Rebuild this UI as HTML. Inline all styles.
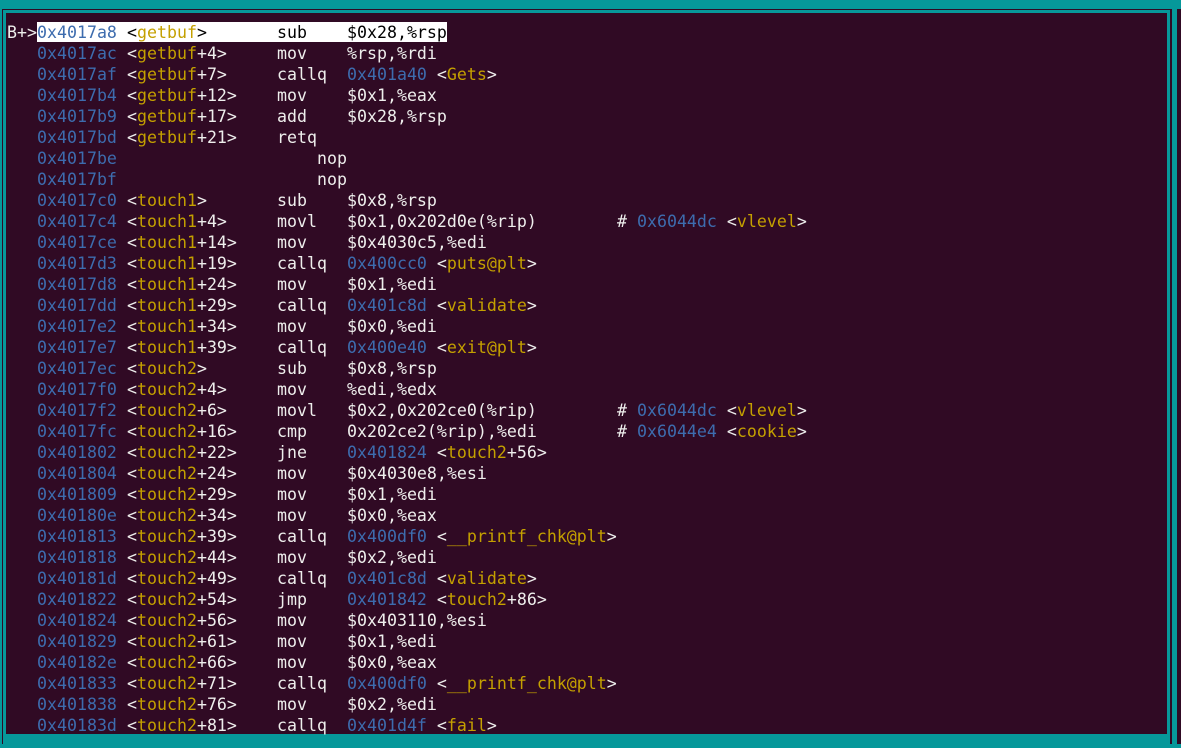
<!DOCTYPE html>
<html><head><style>
html,body{margin:0;padding:0}
body{width:1181px;height:748px;background:#300a24;position:relative;overflow:hidden;font-family:"DejaVu Sans Mono","Liberation Mono",monospace;font-size:16.6px;color:#eeeeec}
.b{position:absolute;background:#06989a}
.r{position:absolute;left:7px;height:21px;width:1150px;line-height:21px;white-space:pre}
.r span{position:absolute;top:0}
.a{color:#3d6cae}.y{color:#c4a000}
</style></head><body>
<div class="b" style="left:0;top:0;width:1181px;height:9px"></div>
<div class="b" style="left:0;top:0;width:2px;height:748px"></div>
<div class="b" style="left:0;top:744px;width:1181px;height:4px"></div>
<div class="b" style="left:1172px;top:0;width:5px;height:748px"></div>
<div class="b" style="left:3px;top:10px;width:1167px;height:3px"></div>
<div class="b" style="left:3px;top:10px;width:3px;height:734px"></div>
<div class="b" style="left:1167px;top:10px;width:3px;height:734px"></div>
<div class="b" style="left:3px;top:734px;width:1167px;height:10px"></div>
<div style="position:absolute;left:37px;top:22px;width:410px;height:20px;background:#fff"></div>
<div id="c"></div>
<script>
var rows=[
["0x4017a8","getbuf","","sub","$0x28,%rsp"],
["0x4017ac","getbuf","+4","mov","%rsp,%rdi"],
["0x4017af","getbuf","+7","callq","@0x401a40|Gets"],
["0x4017b4","getbuf","+12","mov","$0x1,%eax"],
["0x4017b9","getbuf","+17","add","$0x28,%rsp"],
["0x4017bd","getbuf","+21","retq",""],
["0x4017be",null,"","nop",""],
["0x4017bf",null,"","nop",""],
["0x4017c0","touch1","","sub","$0x8,%rsp"],
["0x4017c4","touch1","+4","movl","$0x1,0x202d0e(%rip)","0x6044dc","vlevel"],
["0x4017ce","touch1","+14","mov","$0x4030c5,%edi"],
["0x4017d3","touch1","+19","callq","@0x400cc0|puts@plt"],
["0x4017d8","touch1","+24","mov","$0x1,%edi"],
["0x4017dd","touch1","+29","callq","@0x401c8d|validate"],
["0x4017e2","touch1","+34","mov","$0x0,%edi"],
["0x4017e7","touch1","+39","callq","@0x400e40|exit@plt"],
["0x4017ec","touch2","","sub","$0x8,%rsp"],
["0x4017f0","touch2","+4","mov","%edi,%edx"],
["0x4017f2","touch2","+6","movl","$0x2,0x202ce0(%rip)","0x6044dc","vlevel"],
["0x4017fc","touch2","+16","cmp","0x202ce2(%rip),%edi","0x6044e4","cookie"],
["0x401802","touch2","+22","jne","@0x401824|touch2|+56"],
["0x401804","touch2","+24","mov","$0x4030e8,%esi"],
["0x401809","touch2","+29","mov","$0x1,%edi"],
["0x40180e","touch2","+34","mov","$0x0,%eax"],
["0x401813","touch2","+39","callq","@0x400df0|__printf_chk@plt"],
["0x401818","touch2","+44","mov","$0x2,%edi"],
["0x40181d","touch2","+49","callq","@0x401c8d|validate"],
["0x401822","touch2","+54","jmp","@0x401842|touch2|+86"],
["0x401824","touch2","+56","mov","$0x403110,%esi"],
["0x401829","touch2","+61","mov","$0x1,%edi"],
["0x40182e","touch2","+66","mov","$0x0,%eax"],
["0x401833","touch2","+71","callq","@0x400df0|__printf_chk@plt"],
["0x401838","touch2","+76","mov","$0x2,%edi"],
["0x40183d","touch2","+81","callq","@0x401d4f|fail"]];
function e(s){return s.replace(/&/g,'&amp;').replace(/</g,'&lt;').replace(/>/g,'&gt;');}
var h='';
rows.forEach(function(r,i){
 var first=i==0;
 var s='<div class="r" style="top:'+(21.5+i*21)+'px">';
 if(first)s+='<span style="left:0">B+&gt;</span>';
 var tc=first?'color:#000;':'';
 s+='<span class="a" style="left:30px">'+r[0]+'</span>';
 if(r[1])s+='<span style="left:120px;'+tc+'">&lt;<i class="y" style="font-style:normal">'+r[1]+'</i>'+e(r[2])+'&gt;</span>';
 s+='<span style="left:'+(r[1]?270:310)+'px;'+tc+'">'+r[3]+'</span>';
 var op=r[4];
 if(op){
  if(op[0]=='@'){var p=op.slice(1).split('|');
   s+='<span style="left:340px"><i class="a" style="font-style:normal">'+p[0]+'</i> &lt;<i class="y" style="font-style:normal">'+e(p[1])+'</i>'+(p[2]||'')+'&gt;</span>';
  }else s+='<span style="left:340px;'+tc+'">'+e(op)+'</span>';
 }
 if(r[5])s+='<span style="left:610px"># <i class="a" style="font-style:normal">'+r[5]+'</i> &lt;<i class="y" style="font-style:normal">'+r[6]+'</i>&gt;</span>';
 h+=s+'</div>';
});
document.getElementById('c').innerHTML=h;
</script>
</body></html>
